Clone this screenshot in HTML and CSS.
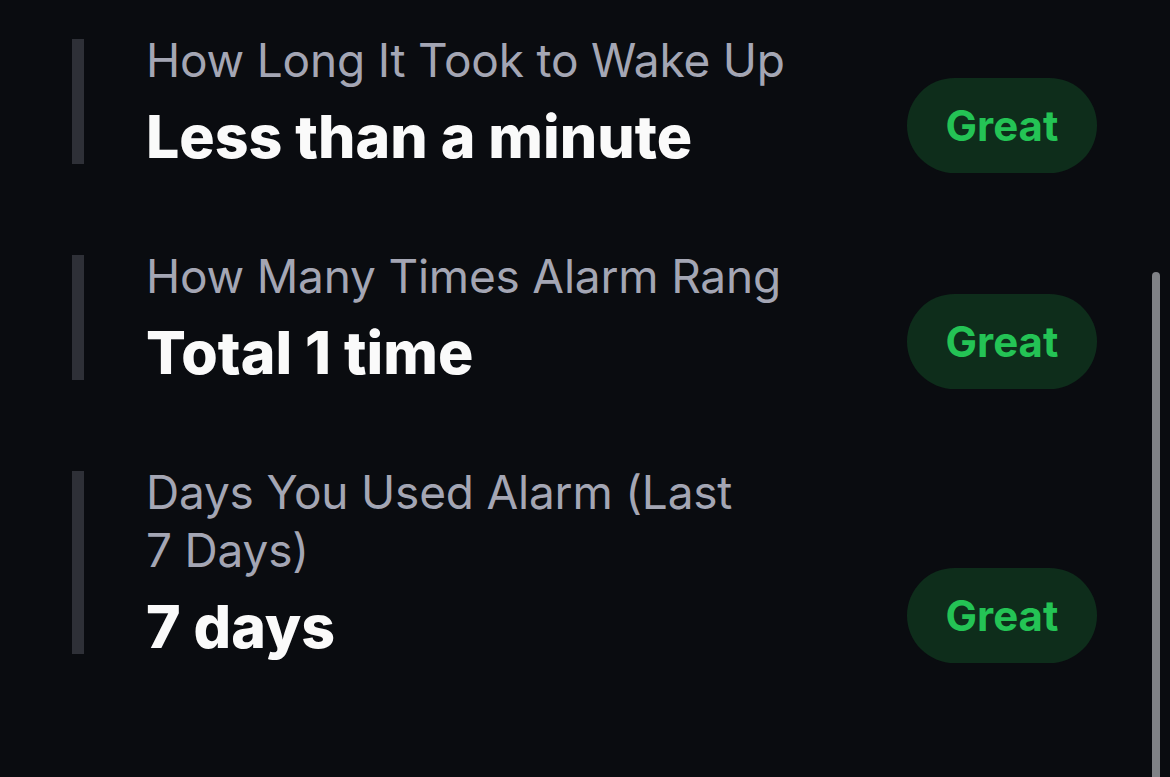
FILE: index.html
```html
<!DOCTYPE html>
<html lang="en">
<head>
<meta charset="utf-8">
<title>Alarm stats</title>
<link rel="stylesheet" href="styles.css">
</head>
<body>
<main class="list">
  <section class="row">
    <div class="bar"></div>
    <div class="text">
      <div class="label">How Long It Took to Wake Up</div>
      <div class="value">Less than a minute</div>
    </div>
    <div class="badge">Great</div>
  </section>
  <section class="row">
    <div class="bar"></div>
    <div class="text">
      <div class="label">How Many Times Alarm Rang</div>
      <div class="value">Total 1 time</div>
    </div>
    <div class="badge">Great</div>
  </section>
  <section class="row">
    <div class="bar"></div>
    <div class="text">
      <div class="label label-narrow">Days You Used Alarm (Last 7 Days)</div>
      <div class="value">7 days</div>
    </div>
    <div class="badge">Great</div>
  </section>
</main>
<div class="scrollbar"></div>
</body>
</html>
```

FILE: styles.css
```css
html, body {
  margin: 0;
  padding: 0;
  background: #0a0c10;
  height: 100%;
  overflow: hidden;
}
body {
  font-family: Inter, "Noto Sans", sans-serif;
  position: relative;
}
.list {
  display: flex;
  flex-direction: column;
  gap: 75px;
  padding: 31px 73px 0 72px;
}
.row {
  display: flex;
  align-items: flex-end;
}
.bar {
  width: 12px;
  align-self: stretch;
  margin: 8px 0;
  background: #2e3037;
  flex: none;
}
.text {
  flex: 1;
  margin-left: 62px;
}
.label {
  font-size: 46px;
  line-height: 58px;
  color: #a4a6b4;
  font-weight: 400;
  letter-spacing: -0.2px;
  white-space: nowrap;
}
.label-narrow {
  white-space: normal;
  max-width: 610px;
}
.value {
  font-size: 59px;
  line-height: 71px;
  margin-top: 12px;
  font-weight: 800;
  color: #fafafa;
  letter-spacing: 0;
}
.badge {
  flex: none;
  width: 190px;
  height: 95px;
  margin-bottom: -1px;
  border-radius: 48px;
  background: #0e2d1b;
  color: #24c355;
  font-weight: 700;
  font-size: 42px;
  display: flex;
  align-items: center;
  justify-content: center;
}
.scrollbar {
  position: absolute;
  left: 1152px;
  top: 272px;
  width: 8px;
  height: 520px;
  border-radius: 4px;
  background: #808286;
}
```
